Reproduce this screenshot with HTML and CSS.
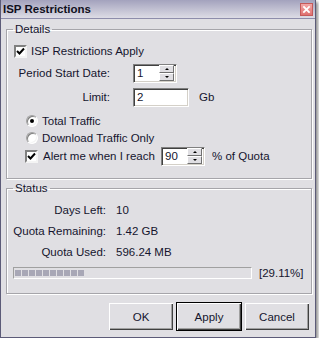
FILE: index.html
```html
<!DOCTYPE html>
<html lang="en">
<head>
  <meta charset="UTF-8" />
  <title>ISP Restrictions</title>
  <link rel="stylesheet" href="styles.css">
</head>
<body>
  <div class="window">
    <div class="titlebar">
      <span class="title">ISP Restrictions</span>
      <span class="close">
        <svg viewBox="0 0 13 13" width="13" height="13">
          <path d="M3.5 3.5 L9.5 9.5 M9.5 3.5 L3.5 9.5" stroke="#fff" stroke-width="2.2" stroke-linecap="square"/>
        </svg>
      </span>
    </div>

    <div class="client">
      <fieldset class="group details">
        <legend>Details</legend>
        <div class="group-body">
          <label class="check-row apply">
            <span class="checkbox"><svg viewBox="0 0 9 9" width="9" height="9"><path d="M1 4 L3.5 6.5 L8 1.5" fill="none" stroke="#000" stroke-width="2"/></svg></span>
            ISP Restrictions Apply
          </label>

          <div class="field-row period">
            <span class="field-label">Period Start Date:</span>
            <div class="spinner">
              <span class="value">1</span>
              <span class="spin-buttons">
                <span class="spin up"></span>
                <span class="spin down"></span>
              </span>
            </div>
          </div>

          <div class="field-row limit">
            <span class="field-label">Limit:</span>
            <div class="textbox"><span class="value">2</span></div>
            <span class="unit">Gb</span>
          </div>

          <label class="radio-row total">
            <span class="radio checked"></span>
            Total Traffic
          </label>
          <label class="radio-row download">
            <span class="radio"></span>
            Download Traffic Only
          </label>

          <div class="alert-row">
            <span class="checkbox"><svg viewBox="0 0 9 9" width="9" height="9"><path d="M1 4 L3.5 6.5 L8 1.5" fill="none" stroke="#000" stroke-width="2"/></svg></span>
            <span class="alert-text">Alert me when I reach</span>
            <div class="spinner alert-spin">
              <span class="value">90</span>
              <span class="spin-buttons">
                <span class="spin up"></span>
                <span class="spin down"></span>
              </span>
            </div>
            <span class="unit">% of Quota</span>
          </div>
        </div>
      </fieldset>

      <fieldset class="group status">
        <legend>Status</legend>
        <div class="group-body">
          <div class="stat-grid">
            <span class="stat-label">Days Left:</span><span>10</span>
            <span class="stat-label">Quota Remaining:</span><span>1.42 GB</span>
            <span class="stat-label">Quota Used:</span><span>596.24 MB</span>
          </div>
          <div class="progress-row">
            <div class="progress">
              <span class="block"></span><span class="block"></span><span class="block"></span><span class="block"></span><span class="block"></span>
              <span class="block"></span><span class="block"></span><span class="block"></span><span class="block"></span><span class="block"></span>
            </div>
            <span class="percent">[29.11%]</span>
          </div>
        </div>
      </fieldset>

      <div class="buttons">
        <button>OK</button>
        <button class="default">Apply</button>
        <button>Cancel</button>
      </div>
    </div>
  </div>
</body>
</html>
```

FILE: styles.css
```css
:root {
  --face: #e0dfe3;
  --text: #15152e;
  --shadow: #a6a5aa;
}

body {
  margin: 0;
  background: #ffffff;
  font-family: 'Liberation Sans', Arial, sans-serif;
  font-size: 11px;
  color: var(--text);
  white-space: nowrap;
}

.window {
  width: 316px;
  height: 338px;
  box-sizing: border-box;
  border: 1px solid #5c5b78;
  border-top: none;
  background: var(--face);
  box-shadow: 2px 2px 3px rgba(0, 0, 0, 0.45);
}

.titlebar {
  height: 18px;
  border-bottom: 1px solid #8e8dab;
  background: linear-gradient(#a3a2bd, #dddce5);
  display: flex;
  align-items: center;
  justify-content: space-between;
  padding: 0 2px;
}

.title {
  font-weight: bold;
  font-size: 11.5px;
  color: #101020;
}

.close {
  width: 11px;
  height: 11px;
  border: 1px solid #c45a5a;
  background: linear-gradient(#f2a7a7, #e07070);
  display: flex;
  align-items: center;
  justify-content: center;
  margin-top: 1px;
}

.close svg {
  width: 11px;
  height: 11px;
}

.client {
  padding: 4px 3px 0 5px;
}

/* group boxes */
.group {
  margin: 0;
  padding: 0;
  border: 1px solid var(--shadow);
  box-shadow: inset 1px 1px 0 #fff, 1px 1px 0 #fff;
  min-width: 0;
}

.group legend {
  margin-left: 6px;
  padding: 0 2px;
  line-height: 13px;
  font-size: 11.5px;
}

.details .group-body {
  padding: 8px 0 12px 7px;
}

.status {
  margin-top: 3px;
}

.status .group-body {
  padding: 8px 0 14px 6px;
}

/* checkbox & radio */
.checkbox {
  width: 9px;
  height: 9px;
  background: #fff;
  border-top: 2px solid #808080;
  border-left: 2px solid #808080;
  border-right: 2px solid #f4f4f4;
  border-bottom: 2px solid #f4f4f4;
  display: inline-flex;
  align-items: center;
  justify-content: center;
}

.radio {
  width: 12px;
  height: 12px;
  border-radius: 50%;
  background: #fff;
  box-shadow: inset 1px 1px 0 #808080, inset -1px -1px 0 #f4f4f4;
  border: 1px solid;
  border-color: #a0a0a0 #fff #fff #a0a0a0;
  box-sizing: border-box;
  display: inline-flex;
  align-items: center;
  justify-content: center;
}

.radio.checked::after {
  content: "";
  width: 4px;
  height: 4px;
  border-radius: 50%;
  background: #000;
}

.check-row,
.radio-row,
.alert-row,
.field-row {
  display: flex;
  align-items: center;
  font-size: 11.5px;
}

.check-row {
  height: 14px;
  gap: 4px;
}

.field-row {
  height: 20px;
}

.period {
  margin-top: 5px;
}

.limit {
  margin-top: 4px;
}

.field-label {
  width: 96px;
  text-align: right;
  margin-right: 23px;
}

.radio-row {
  height: 14px;
  margin-left: 12px;
  gap: 4px;
}

.total {
  margin-top: 7px;
}

.download {
  margin-top: 3px;
}

.alert-row {
  height: 20px;
  margin-left: 11px;
  margin-top: 1px;
}

.alert-text {
  margin-left: 5px;
  width: 118px;
}

/* edit fields */
.spinner,
.textbox {
  height: 19px;
  box-sizing: border-box;
  background: #fff;
  border-top: 1px solid #808080;
  border-left: 1px solid #808080;
  border-right: 1px solid #fff;
  border-bottom: 1px solid #fff;
  box-shadow: inset 1px 1px 0 #404040, inset -1px -1px 0 #d4d0c8;
  display: flex;
  align-items: center;
  justify-content: space-between;
}

.spinner {
  width: 44px;
}

.textbox {
  width: 56px;
}

.value {
  padding-left: 3px;
}

.spin-buttons {
  display: flex;
  flex-direction: column;
  margin-right: 2px;
}

.spin {
  width: 13px;
  height: 6px;
  background: var(--face);
  border-top: 1px solid #fff;
  border-left: 1px solid #fff;
  border-right: 1px solid #707070;
  border-bottom: 1px solid #707070;
  display: flex;
  align-items: center;
  justify-content: center;
}

.spin::after {
  content: "";
  border-left: 2px solid transparent;
  border-right: 2px solid transparent;
}

.spin.up::after {
  border-bottom: 2px solid #000;
}

.spin.down::after {
  border-top: 2px solid #000;
}

.unit {
  margin-left: 10px;
}

.alert-row .unit {
  margin-left: 7px;
}

/* status */
.stat-grid {
  display: grid;
  grid-template-columns: 93px auto;
  column-gap: 10px;
  row-gap: 7px;
  grid-auto-rows: 14px;
  align-items: center;
  font-size: 11.5px;
}

.stat-label {
  text-align: right;
}

.progress-row {
  display: flex;
  align-items: center;
  margin-top: 8px;
  gap: 7px;
}

.progress {
  width: 239px;
  height: 12px;
  box-sizing: border-box;
  border-top: 1px solid #a0a0a0;
  border-left: 1px solid #a0a0a0;
  border-right: 1px solid #fff;
  border-bottom: 1px solid #fff;
  padding: 2px 1px;
  display: flex;
  gap: 1px;
}

.block {
  width: 6px;
  background: #a8a7b6;
}

.percent {
  font-size: 11.5px;
}

/* dialog buttons */
.buttons {
  display: flex;
  justify-content: flex-end;
  gap: 4px;
  margin-top: 9px;
  padding-right: 3px;
}

.buttons button {
  width: 64px;
  height: 27px;
  font-family: inherit;
  font-size: 11.5px;
  color: var(--text);
  background: var(--face);
  border: none;
  box-shadow: inset 1px 1px 0 #fff, inset -1px -1px 0 #404040, inset -2px -2px 0 #a0a0a0;
  padding: 0;
}

.buttons button.default {
  box-shadow: 0 0 0 1px #000, inset 1px 1px 0 #fff, inset -1px -1px 0 #404040, inset -2px -2px 0 #a0a0a0;
}
```
